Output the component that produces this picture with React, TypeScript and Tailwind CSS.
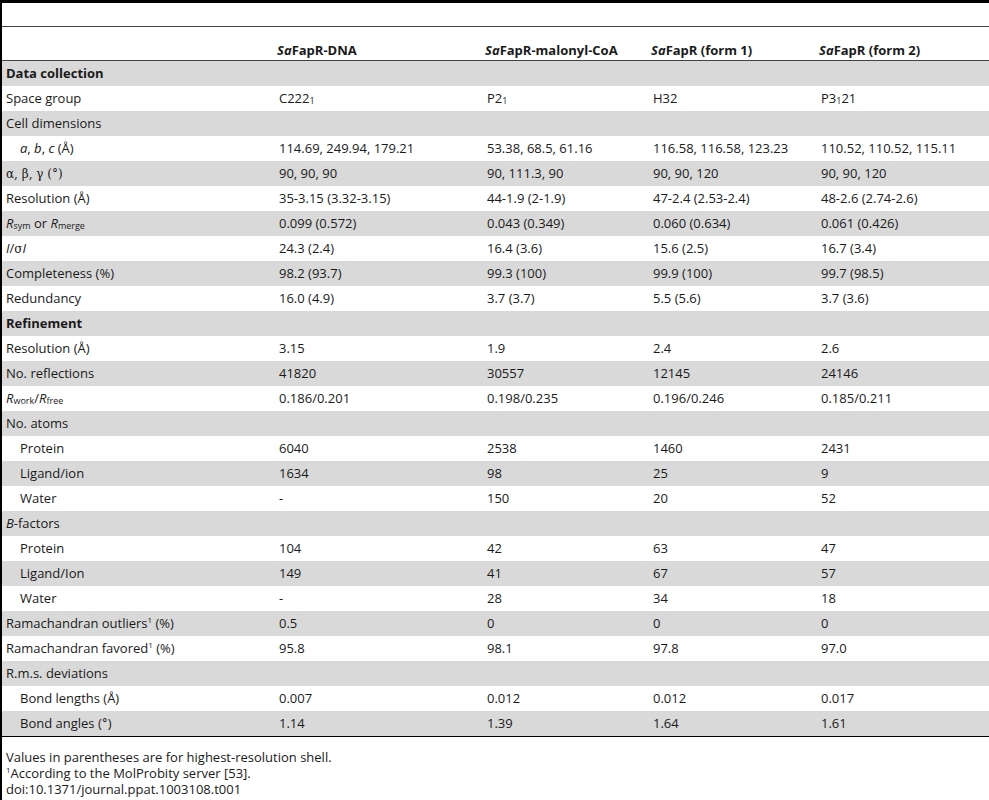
import type { ReactNode } from "react";

type Row = {
  label: ReactNode;
  values?: ReactNode[];
  indent?: boolean;
  bold?: boolean;
};

const Sub = ({ children }: { children: ReactNode }) => (
  <sub className="text-[9px] relative top-[1px] align-baseline">{children}</sub>
);

const Sup = ({ children }: { children: ReactNode }) => (
  <sup className="text-[8px] relative -top-[5px] align-baseline">{children}</sup>
);

const Sa = ({ rest }: { rest: string }) => (
  <>
    <i>Sa</i>
    {rest}
  </>
);

const rows: Row[] = [
  { label: "Data collection", bold: true },
  {
    label: "Space group",
    values: [
      <>C222<Sub>1</Sub></>,
      <>P2<Sub>1</Sub></>,
      "H32",
      <>P3<Sub>1</Sub>21</>,
    ],
  },
  { label: "Cell dimensions" },
  {
    label: (
      <>
        <i>a</i>, <i>b</i>, <i>c</i> (Å)
      </>
    ),
    indent: true,
    values: ["114.69, 249.94, 179.21", "53.38, 68.5, 61.16", "116.58, 116.58, 123.23", "110.52, 110.52, 115.11"],
  },
  {
    label: <span className="font-['DejaVu_Serif',serif] text-[12px]">α, β, γ (°)</span>,
    values: ["90, 90, 90", "90, 111.3, 90", "90, 90, 120", "90, 90, 120"],
  },
  {
    label: "Resolution (Å)",
    values: ["35-3.15 (3.32-3.15)", "44-1.9 (2-1.9)", "47-2.4 (2.53-2.4)", "48-2.6 (2.74-2.6)"],
  },
  {
    label: (
      <>
        <i>R</i>
        <Sub>sym</Sub> or <i>R</i>
        <Sub>merge</Sub>
      </>
    ),
    values: ["0.099 (0.572)", "0.043 (0.349)", "0.060 (0.634)", "0.061 (0.426)"],
  },
  {
    label: (
      <>
        <i>I</i>/<span className="font-['DejaVu_Serif',serif] text-[12px]">σ</span>
        <i>I</i>
      </>
    ),
    values: ["24.3 (2.4)", "16.4 (3.6)", "15.6 (2.5)", "16.7 (3.4)"],
  },
  { label: "Completeness (%)", values: ["98.2 (93.7)", "99.3 (100)", "99.9 (100)", "99.7 (98.5)"] },
  { label: "Redundancy", values: ["16.0 (4.9)", "3.7 (3.7)", "5.5 (5.6)", "3.7 (3.6)"] },
  { label: "Refinement", bold: true },
  { label: "Resolution (Å)", values: ["3.15", "1.9", "2.4", "2.6"] },
  { label: "No. reflections", values: ["41820", "30557", "12145", "24146"] },
  {
    label: (
      <>
        <i>R</i>
        <Sub>work</Sub>/<i>R</i>
        <Sub>free</Sub>
      </>
    ),
    values: ["0.186/0.201", "0.198/0.235", "0.196/0.246", "0.185/0.211"],
  },
  { label: "No. atoms" },
  { label: "Protein", indent: true, values: ["6040", "2538", "1460", "2431"] },
  { label: "Ligand/ion", indent: true, values: ["1634", "98", "25", "9"] },
  { label: "Water", indent: true, values: ["-", "150", "20", "52"] },
  {
    label: (
      <>
        <i>B</i>-factors
      </>
    ),
  },
  { label: "Protein", indent: true, values: ["104", "42", "63", "47"] },
  { label: "Ligand/Ion", indent: true, values: ["149", "41", "67", "57"] },
  { label: "Water", indent: true, values: ["-", "28", "34", "18"] },
  {
    label: (
      <>
        Ramachandran outliers<Sup>1</Sup> (%)
      </>
    ),
    values: ["0.5", "0", "0", "0"],
  },
  {
    label: (
      <>
        Ramachandran favored<Sup>1</Sup> (%)
      </>
    ),
    values: ["95.8", "98.1", "97.8", "97.0"],
  },
  { label: "R.m.s. deviations" },
  { label: "Bond lengths (Å)", indent: true, values: ["0.007", "0.012", "0.012", "0.017"] },
  {
    label: (
      <>
        Bond angles (<span className="font-['DejaVu_Serif',serif] text-[12px]">°</span>)
      </>
    ),
    indent: true,
    values: ["1.14", "1.39", "1.64", "1.61"],
  },
];

const headers = [
  <Sa rest="FapR-DNA" />,
  <Sa rest="FapR-malonyl-CoA" />,
  <Sa rest="FapR (form 1)" />,
  <Sa rest="FapR (form 2)" />,
];

// column widths after the label column
const cols = ["w-[208px]", "w-[166px]", "w-[168px]", "flex-1"];

export default function App() {
  return (
    <div className="w-[989px] h-[800px] bg-white text-[#1a1a1a] font-['Open_Sans',sans-serif] text-[13px] border-l-2 border-black overflow-hidden">
      {/* top rule */}
      <div className="h-[3px] bg-black" />
      <div className="h-[23px]" />
      <div className="h-px bg-[#444]" />

      {/* header */}
      <div className="flex h-[33px] items-end pb-[1px] font-bold leading-[18px]">
        <div className="w-[273px]" />
        {headers.map((h, i) => (
          <div key={i} className={`${cols[i]} pl-[2px]`}>
            {h}
          </div>
        ))}
      </div>
      <div className="h-px bg-[#444]" />

      {/* body */}
      <div>
        {rows.map((r, i) => (
          <div
            key={i}
            className={`flex h-[25px] items-center ${i % 2 === 0 ? "bg-[#d9d9d9]" : "bg-white"}`}
          >
            <div className={`w-[273px] ${r.indent ? "pl-[18px]" : "pl-[4px]"} ${r.bold ? "font-bold" : ""}`}>
              {r.label}
            </div>
            {r.values?.map((v, j) => (
              <div key={j} className={`${cols[j]} pl-[4px]`}>
                {v}
              </div>
            ))}
          </div>
        ))}
      </div>
      <div className="h-px bg-black" />

      {/* notes */}
      <div className="pt-[12px] pl-[4px] leading-[16px]">
        <div>Values in parentheses are for highest-resolution shell.</div>
        <div>
          <Sup>1</Sup>According to the MolProbity server [53].
        </div>
        <div>doi:10.1371/journal.ppat.1003108.t001</div>
      </div>
    </div>
  );
}
